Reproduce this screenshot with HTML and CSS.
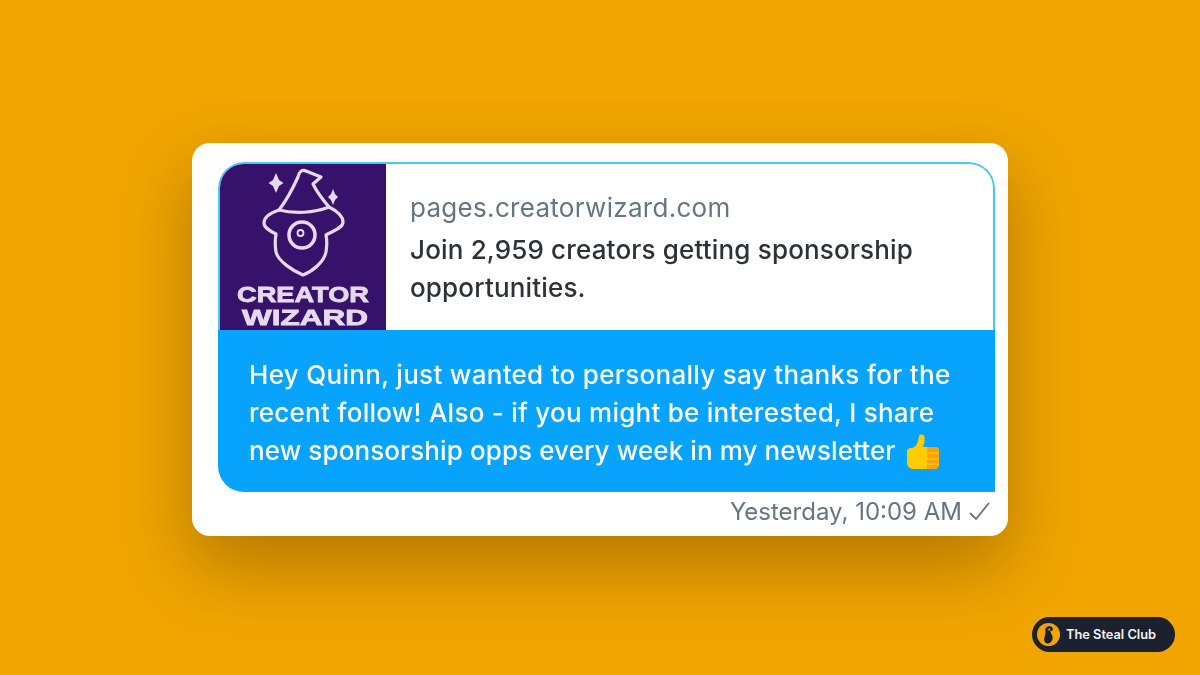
FILE: index.html
```html
<!DOCTYPE html>
<html lang="en">
<head>
<meta charset="utf-8">
<title>Creator Wizard message</title>
<link rel="stylesheet" href="styles.css">
</head>
<body>
<main class="stage">
  <section class="card">
    <div class="bubble">
      <div class="link">
        <div class="logo">
          <svg class="logo-art" viewBox="0 0 166 166" width="166" height="166">
            <g fill="none" stroke="#e6d9ee" stroke-width="3.200" stroke-linejoin="round" stroke-linecap="round">
              <path d="M59 46 C66 37 73 24 78 13 C79 8 82 5 86 7 L101 13 L93 20 C97 28 103 36 109 43"/>
              <path d="M59 46 C50 49 44 53 44 59 C44 64 50 67 56 70 C55 76 55 82 56 88 C58 97 73 107 83 111 C93 107 104 98 106 88 C107 82 107 76 106 71 C113 67 123 64 123 58 C123 52 117 47 109 43 C94 49 74 50 59 46 Z"/>
              <circle cx="82" cy="71" r="13" stroke-width="3.600"/>
              <circle cx="80.500" cy="69" r="3" stroke-width="1.800"/>
            </g>
            <path class="spark" d="M56 9 L59 16 L63.500 19 L59 22 L56 29 L53 22 L48.500 19 L53 16 Z"/>
            <path class="spark" d="M113 25 L115 30 L118 33 L115 36 L113 41 L111 36 L108 33 L111 30 Z"/>
            <text class="logo-text" x="83" y="138" text-anchor="middle" textLength="132" lengthAdjust="spacingAndGlyphs">CREATOR</text>
            <text class="logo-text" x="85" y="161" text-anchor="middle" textLength="126" lengthAdjust="spacingAndGlyphs">WIZARD</text>
          </svg>
        </div>
        <div class="link-copy">
          <div class="domain">pages.creatorwizard.com</div>
          <div class="title">Join 2,959 creators getting sponsorship opportunities.</div>
        </div>
      </div>
      <div class="message">
        <p class="message-line message-line-wide">Hey Quinn, just wanted to personally say thanks for the</p>
        <p class="message-line">recent follow! Also - if you might be interested, I share</p>
        <p class="message-line message-line-tight">new sponsorship opps every week in my newsletter
          <svg class="thumb" viewBox="0 0 33 35" width="33" height="35">
            <path fill="#ffcc00" d="M1 17 C1 15 3 14 6 14 C9 13 11 11 12 7 L13 2 C14 0 18 0 18.500 3 C19 7 18 10 17 13 L28 13 C32 13 33 15 33 18 L33 30 C33 33 31 35 28 35 L8 35 C3 35 1 32 1 28 Z"/>
            <path fill="#ff9f0a" d="M21 13 H29 C32 13 33 15 33 18 V30 C33 33 31 35 28 35 H21 Z"/>
            <path stroke="#ffcc00" stroke-width="1.500" d="M21 19 H33 M21 25 H33 M21 30 H33"/>
          </svg>
        </p>
      </div>
    </div>
    <div class="meta">
      <span class="time">Yesterday, 10:09 AM</span>
      <svg class="check" viewBox="0 0 21 18" width="21" height="18">
        <path d="M1 11 L7 17 L20 1" fill="none" stroke="#66757f" stroke-width="1.800"/>
      </svg>
    </div>
  </section>
</main>
<div class="badge">
  <svg class="badge-icon" viewBox="0 0 28 28" width="23" height="23">
    <circle cx="14" cy="14" r="14" fill="#f0a500"/>
    <path fill="#1b1f2b" d="M10 9 C10 5 13 4 15 4 C18 4 20 6 19 9 L16 10 C17 13 19 15 19 18 C19 22 16 25 13 25 C10 25 8 22 9 18 C9.500 15 11 12 10 9 Z"/>
    <circle cx="15" cy="8" r="1.300" fill="#f0a500"/>
  </svg>
  <span class="badge-label">The Steal Club</span>
</div>
</body>
</html>
```

FILE: styles.css
```css
* {
  box-sizing: border-box;
}

html,
body {
  margin: 0;
  height: 675px;
  overflow: hidden;
}

body {
  position: relative;
  background: #f0a500;
  font-family: "Inter", "Liberation Sans", sans-serif;
}

.stage {
  display: flex;
  justify-content: center;
  padding-top: 143px;
}

.card {
  width: 816px;
  height: 393px;
  padding: 19px 13px 0 26px;
  background: #fff;
  border-radius: 18px;
  box-shadow: 0 30px 70px rgba(40, 20, 0, 0.3);
}

.bubble {
  width: 777px;
  height: 330px;
  display: flex;
  flex-direction: column;
  overflow: hidden;
  border-radius: 26px 26px 0 26px;
}

.link {
  display: flex;
  height: 168px;
  border: 2px solid #4cc4fb;
  border-bottom: 0;
  border-radius: 26px 26px 0 0;
  overflow: hidden;
}

.logo {
  flex: 0 0 166px;
  background: #37126a;
  filter: blur(0.7px);
}

.logo-art {
  display: block;
}

.spark {
  fill: #e6d9ee;
}

.logo-text {
  fill: #e6d9ee;
  font-family: "Liberation Sans", sans-serif;
  font-weight: 700;
  font-size: 22px;
  stroke: #e6d9ee;
  stroke-width: 0.8px;
}

.link-copy {
  flex: 1;
  padding: 25px 24px 0;
  filter: blur(0.6px);
}

.domain {
  font-size: 26px;
  letter-spacing: 0.3px;
  line-height: 38px;
  color: #66757f;
}

.title {
  width: 530px;
  margin-top: 4px;
  font-size: 26px;
  font-weight: 500;
  letter-spacing: 0.17px;
  line-height: 38px;
  color: #2b3238;
}

.message {
  flex: 1;
  padding: 26px 0 0 31px;
  background: #07a3fd;
  color: #fff;
}

.message-line {
  margin: 0;
  display: flex;
  align-items: center;
  gap: 10px;
  height: 38px;
  font-size: 26px;
  font-weight: 500;
  letter-spacing: 0.25px;
  line-height: 38px;
  filter: blur(0.6px);
}

.message-line-wide {
  letter-spacing: 0.3px;
}

.message-line-tight {
  letter-spacing: 0.1px;
}

.thumb {
  flex: none;
}

.meta {
  display: flex;
  justify-content: flex-end;
  align-items: center;
  gap: 7px;
  height: 38px;
  padding-right: 5px;
  filter: blur(0.6px);
}

.time {
  font-size: 24px;
  color: #66757f;
}

.check {
  flex: none;
}

.badge {
  position: absolute;
  left: 1032px;
  top: 617px;
  width: 143px;
  height: 35px;
  display: flex;
  align-items: center;
  gap: 6px;
  padding-left: 5px;
  background: #1b212e;
  border-radius: 18px;
}

.badge-icon {
  flex: none;
}

.badge-label {
  font-size: 12.8px;
  font-weight: 600;
  color: #f2f3f6;
}
```
